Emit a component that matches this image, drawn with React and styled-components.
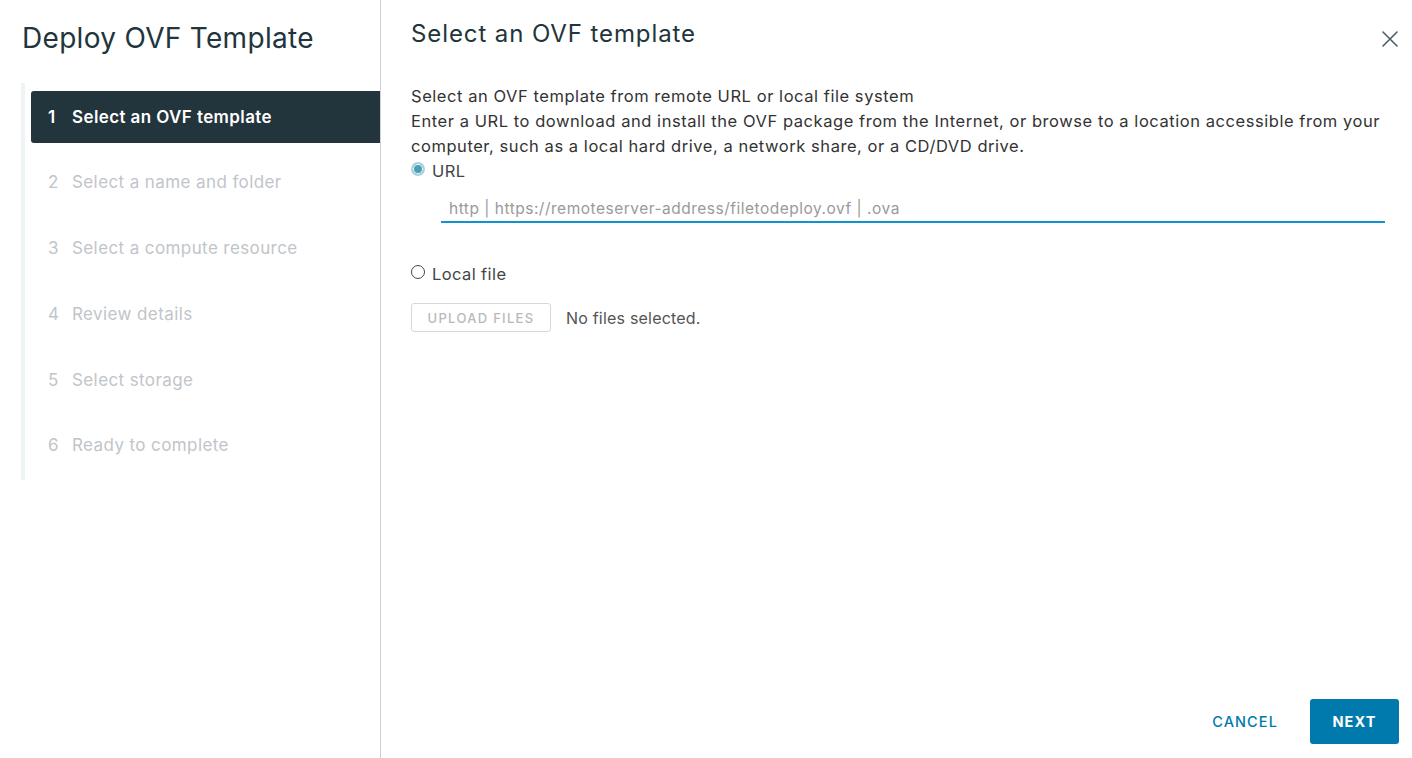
import React, { useState } from 'react';
import styled, { createGlobalStyle } from 'styled-components';

const GlobalStyle = createGlobalStyle`
  html, body {
    margin: 0;
    padding: 0;
    background: #fff;
  }
  body {
    font-family: Inter, "Liberation Sans", sans-serif;
    color: #313131;
  }
  * { box-sizing: border-box; }
`;

const steps = [
  'Select an OVF template',
  'Select a name and folder',
  'Select a compute resource',
  'Review details',
  'Select storage',
  'Ready to complete',
];

const Wizard = styled.div`
  display: flex;
  width: 1412px;
  height: 758px;
  overflow: hidden;
`;

const Sidebar = styled.aside`
  width: 381px;
  flex-shrink: 0;
  border-right: 1px solid #ccd3d8;
  padding-top: 20px;
`;

const WizardTitle = styled.h1`
  margin: 0 0 0 22px;
  font-size: 28px;
  font-weight: 400;
  color: #22343c;
  line-height: 36px;
  letter-spacing: 0.3px;
`;

const StepList = styled.ol`
  list-style: none;
  margin: 27px 0 0 21px;
  padding: 8px 0 8px 6px;
  border-left: 4px solid #eef3f6;
`;

const Step = styled.li`
  display: flex;
  align-items: center;
  height: 52px;
  margin-bottom: 13.8px;
  padding-left: 17px;
  padding-bottom: 1px;
  border-radius: 3px 0 0 3px;
  font-size: 17px;
  letter-spacing: 0.4px;
  background: ${p => (p.$active ? '#22343c' : 'transparent')};
  color: ${p => (p.$active ? '#fff' : '#bfc5ca')};
  font-weight: ${p => (p.$active ? 600 : 400)};
  &:last-child { margin-bottom: 0; }
`;

const StepNum = styled.span`
  width: 24px;
  flex-shrink: 0;
`;

const Main = styled.section`
  flex: 1;
  display: flex;
  flex-direction: column;
  padding: 18px 13px 14px 30px;
`;

const Header = styled.div`
  display: flex;
  justify-content: space-between;
  align-items: flex-start;
`;

const PageTitle = styled.h2`
  margin: 0;
  font-size: 24px;
  font-weight: 400;
  color: #22343c;
  line-height: 32px;
  letter-spacing: 0.9px;
`;

const CloseButton = styled.button`
  border: none;
  background: none;
  padding: 0;
  margin: 12px 0 0 0;
  width: 18px;
  height: 18px;
  cursor: pointer;
  display: flex;
  align-items: center;
  justify-content: center;
`;

const Body = styled.div`
  flex: 1;
  padding-top: 34px;
`;

const Text = styled.p`
  margin: 0;
  font-size: 16.5px;
  letter-spacing: 0.55px;
  line-height: 25px;
  color: #333;
`;

const RadioRow = styled.label`
  display: flex;
  align-items: center;
  gap: 7px;
  font-size: 16.5px;
  letter-spacing: 0.4px;
  line-height: 24px;
  color: #454545;
  margin-top: ${p => p.$top || 0}px;
`;

const RadioDot = styled.span`
  width: 14px;
  height: 14px;
  border-radius: 50%;
  flex-shrink: 0;
  margin-top: -4px;
  border: ${p => (p.$checked ? '2px solid #a9d3de' : '1px solid #454545')};
  background: ${p => (p.$checked ? '#4a9fb5' : '#fff')};
  box-shadow: ${p => (p.$checked ? 'inset 0 0 0 1px #fff' : 'none')};
`;

const UrlInput = styled.input`
  display: block;
  margin: 14px 14px 0 30px;
  width: calc(100% - 44px);
  height: 26px;
  border: none;
  border-bottom: 2px solid #0f93d0;
  padding: 0 8px 2px;
  font-family: inherit;
  font-size: 15.5px;
  letter-spacing: 0.5px;
  color: #333;
  outline: none;
  &::placeholder { color: #9a9a9a; }
`;

const UploadRow = styled.div`
  display: flex;
  align-items: center;
  gap: 15px;
  margin-top: 17px;
`;

const UploadButton = styled.button`
  width: 140px;
  height: 29px;
  border: 1px solid #d7d7d7;
  border-radius: 3px;
  background: #fff;
  color: #b9b9b9;
  font-family: inherit;
  font-size: 13px;
  font-weight: 500;
  letter-spacing: 1.3px;
  padding: 0;
`;

const NoFiles = styled.span`
  font-size: 16px;
  letter-spacing: 0.2px;
  color: #545454;
  margin-top: 1px;
`;

const Footer = styled.div`
  display: flex;
  justify-content: flex-end;
  align-items: center;
  gap: 32px;
`;

const FooterButton = styled.button`
  height: 45px;
  min-width: ${p => (p.$primary ? '89px' : '0')};
  padding: 0 ${p => (p.$primary ? '20px' : '0')};
  border: none;
  border-radius: 3px;
  font-family: inherit;
  font-size: 14.5px;
  letter-spacing: 1.1px;
  font-weight: ${p => (p.$primary ? 700 : 500)};
  background: ${p => (p.$primary ? '#0079ad' : 'transparent')};
  color: ${p => (p.$primary ? '#fff' : '#0079ad')};
  cursor: pointer;
`;

function CloseIcon() {
  return (
    <svg width="16" height="16" viewBox="0 0 16 16">
      <path d="M1 1 L15 15 M15 1 L1 15" stroke="#4f5f66" strokeWidth="1.6" strokeLinecap="round" />
    </svg>
  );
}

export default function App() {
  const [mode, setMode] = useState('url');
  const [url, setUrl] = useState('');

  return (
    <>
      <GlobalStyle />
      <Wizard>
        <Sidebar>
          <WizardTitle>Deploy OVF Template</WizardTitle>
          <StepList>
            {steps.map((s, i) => (
              <Step key={s} $active={i === 0}>
                <StepNum>{i + 1}</StepNum>
                {s}
              </Step>
            ))}
          </StepList>
        </Sidebar>
        <Main>
          <Header>
            <PageTitle>Select an OVF template</PageTitle>
            <CloseButton aria-label="Close">
              <CloseIcon />
            </CloseButton>
          </Header>
          <Body>
            <Text>Select an OVF template from remote URL or local file system</Text>
            <Text>
              Enter a URL to download and install the OVF package from the Internet, or browse to a location accessible from your
              computer, such as a local hard drive, a network share, or a CD/DVD drive.
            </Text>
            <RadioRow onClick={() => setMode('url')}>
              <RadioDot $checked={mode === 'url'} />
              URL
            </RadioRow>
            <UrlInput
              value={url}
              onChange={e => setUrl(e.target.value)}
              placeholder="http | https://remoteserver-address/filetodeploy.ovf | .ova"
            />
            <RadioRow $top={39} onClick={() => setMode('file')}>
              <RadioDot $checked={mode === 'file'} />
              Local file
            </RadioRow>
            <UploadRow>
              <UploadButton>UPLOAD FILES</UploadButton>
              <NoFiles>No files selected.</NoFiles>
            </UploadRow>
          </Body>
          <Footer>
            <FooterButton>CANCEL</FooterButton>
            <FooterButton $primary>NEXT</FooterButton>
          </Footer>
        </Main>
      </Wizard>
    </>
  );
}
